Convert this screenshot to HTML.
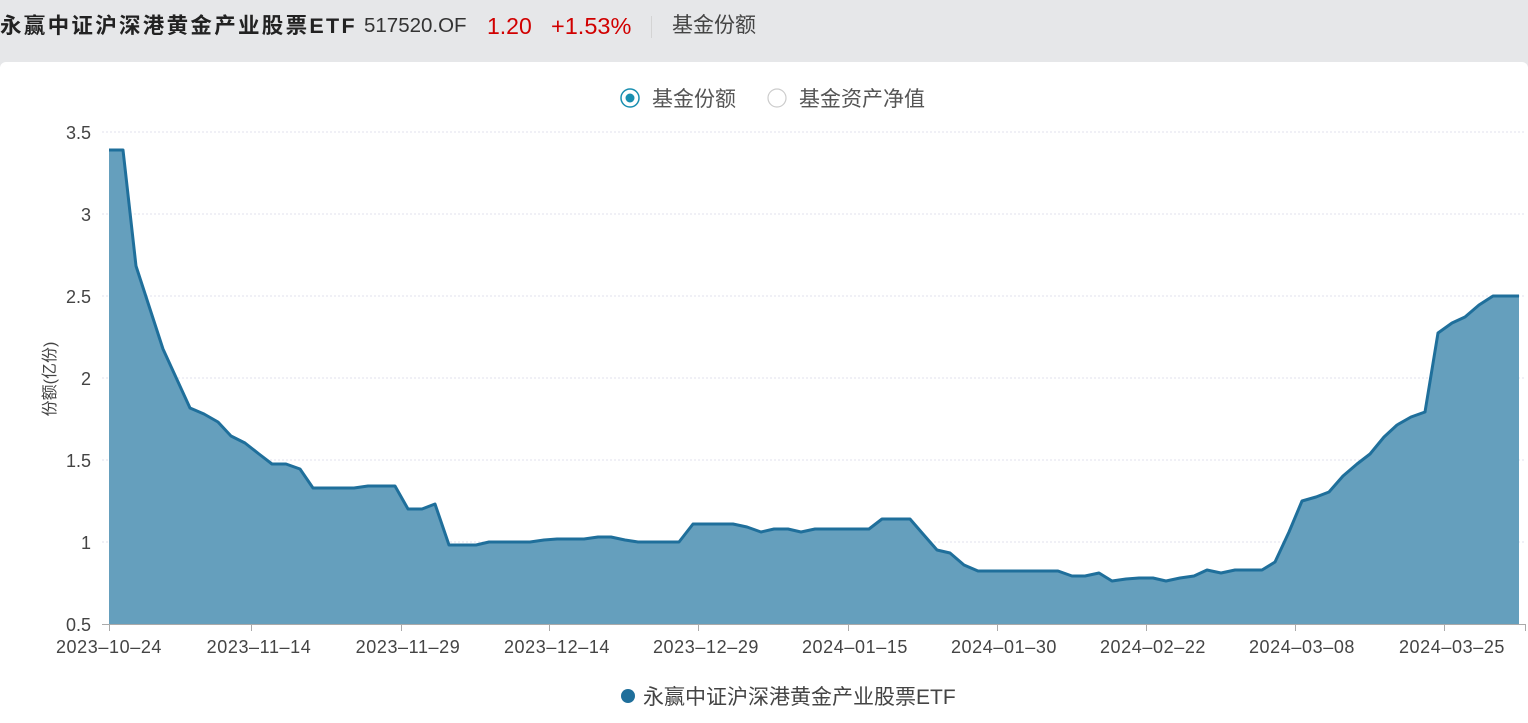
<!DOCTYPE html>
<html><head><meta charset="utf-8"><style>
body{margin:0;width:1528px;height:723px;background:#e6e7e9;font-family:"Liberation Sans","Noto Sans CJK SC",sans-serif;overflow:hidden;position:relative}
.hdr{position:absolute;top:0;left:0;height:62px;width:1528px;line-height:52px;white-space:nowrap}
.card{position:absolute;left:0;top:62px;width:1528px;height:661px;background:#fff;border-radius:6px 6px 0 0}
svg text{font-family:"Liberation Sans","Noto Sans CJK SC",sans-serif}
</style></head><body>
<div class="hdr">
<span style="position:absolute;left:0;font-size:21.5px;font-weight:bold;color:#222;letter-spacing:2.3px">永赢中证沪深港黄金产业股票ETF</span>
<span style="position:absolute;left:364px;font-size:20.5px;color:#333">517520.OF</span>
<span style="position:absolute;left:487px;font-size:23px;color:#d10000">1.20</span>
<span style="position:absolute;left:551px;font-size:23.5px;color:#d10000">+1.53%</span>
<span style="position:absolute;left:651px;top:16px;width:1px;height:22px;background:#d4d4d4"></span>
<span style="position:absolute;left:672px;font-size:21px;color:#444">基金份额</span>
</div>
<div class="card"></div>
<svg style="position:absolute;left:0;top:0" width="1528" height="723">
<circle cx="630" cy="98" r="9" fill="#fff" stroke="#1a8fb0" stroke-width="1.5"/>
<circle cx="630" cy="98" r="4.5" fill="#1a8fb0"/>
<text x="652" y="106" font-size="21" fill="#555">基金份额</text>
<circle cx="777" cy="98" r="9" fill="#fff" stroke="#ccc" stroke-width="1.2"/>
<text x="799" y="106" font-size="21" fill="#555">基金资产净值</text>
<g stroke="#e2e2ee" stroke-dasharray="2,2" stroke-width="1">
<line x1="102" y1="132" x2="1526" y2="132"/><line x1="102" y1="214" x2="1526" y2="214"/><line x1="102" y1="296" x2="1526" y2="296"/><line x1="102" y1="378" x2="1526" y2="378"/><line x1="102" y1="460" x2="1526" y2="460"/><line x1="102" y1="542" x2="1526" y2="542"/>
</g>
<g font-size="18" fill="#444" text-anchor="end">
<text x="91" y="139">3.5</text><text x="91" y="221">3</text><text x="91" y="303">2.5</text><text x="91" y="385">2</text><text x="91" y="467">1.5</text><text x="91" y="549">1</text><text x="91" y="631">0.5</text>
</g>
<text transform="translate(55,379) rotate(-90)" font-size="16" fill="#444" text-anchor="middle">份额(亿份)</text>
<polygon fill="#659fbd" points="109,624 109,150 123,150 136,266 163,349 190,408 204,414 218,422 231,436 245,443 259,454 272,464 286,464 300,469 313,488 327,488 341,488 354,488 368,486 381,486 395,486 408,509 422,509 435,504 449,545 462,545 476,545 489,542 503,542 516,542 530,542 544,540 557,539 571,539 584,539 598,537 611,537 625,540 638,542 652,542 665,542 679,542 693,524 706,524 720,524 733,524 747,527 761,532 774,529 788,529 801,532 815,529 828,529 842,529 855,529 869,529 882,519 896,519 910,519 923,534 937,550 950,553 964,565 978,571 1058,571 1072,576 1085,576 1099,573 1112,581 1126,579 1139,578 1153,578 1166,581 1180,578 1194,576 1207,570 1221,573 1235,570 1248,570 1262,570 1275,562 1289,532 1302,501 1316,497 1329,492 1343,476 1357,464 1370,454 1384,437 1397,425 1411,417 1425,412 1438,333 1452,323 1465,317 1479,305 1493,296 1519,296 1519,624"/>
<polyline fill="none" stroke="#1f6f9b" stroke-width="3" stroke-linejoin="round" points="109,150 123,150 136,266 163,349 190,408 204,414 218,422 231,436 245,443 259,454 272,464 286,464 300,469 313,488 327,488 341,488 354,488 368,486 381,486 395,486 408,509 422,509 435,504 449,545 462,545 476,545 489,542 503,542 516,542 530,542 544,540 557,539 571,539 584,539 598,537 611,537 625,540 638,542 652,542 665,542 679,542 693,524 706,524 720,524 733,524 747,527 761,532 774,529 788,529 801,532 815,529 828,529 842,529 855,529 869,529 882,519 896,519 910,519 923,534 937,550 950,553 964,565 978,571 1058,571 1072,576 1085,576 1099,573 1112,581 1126,579 1139,578 1153,578 1166,581 1180,578 1194,576 1207,570 1221,573 1235,570 1248,570 1262,570 1275,562 1289,532 1302,501 1316,497 1329,492 1343,476 1357,464 1370,454 1384,437 1397,425 1411,417 1425,412 1438,333 1452,323 1465,317 1479,305 1493,296 1519,296"/>
<line x1="102" y1="624.5" x2="1526" y2="624.5" stroke="#aaa"/>
<g stroke="#aaa"><line x1="109.5" y1="624" x2="109.5" y2="631"/><line x1="251.5" y1="624" x2="251.5" y2="631"/><line x1="401.5" y1="624" x2="401.5" y2="631"/><line x1="549.5" y1="624" x2="549.5" y2="631"/><line x1="698.5" y1="624" x2="698.5" y2="631"/><line x1="848.5" y1="624" x2="848.5" y2="631"/><line x1="997.5" y1="624" x2="997.5" y2="631"/><line x1="1146.5" y1="624" x2="1146.5" y2="631"/><line x1="1295.5" y1="624" x2="1295.5" y2="631"/><line x1="1444.5" y1="624" x2="1444.5" y2="631"/><line x1="1525.5" y1="624" x2="1525.5" y2="631"/></g>
<g font-size="18" fill="#444" text-anchor="middle" letter-spacing="0.6">
<text x="109" y="653">2023–10–24</text><text x="259" y="653">2023–11–14</text><text x="408" y="653">2023–11–29</text><text x="557" y="653">2023–12–14</text><text x="706" y="653">2023–12–29</text><text x="855" y="653">2024–01–15</text><text x="1004" y="653">2024–01–30</text><text x="1153" y="653">2024–02–22</text><text x="1302" y="653">2024–03–08</text><text x="1452" y="653">2024–03–25</text>
</g>
<circle cx="628" cy="696" r="7" fill="#1f6f9b"/>
<text x="643" y="704" font-size="21" fill="#444">永赢中证沪深港黄金产业股票ETF</text>
</svg>
</body></html>
